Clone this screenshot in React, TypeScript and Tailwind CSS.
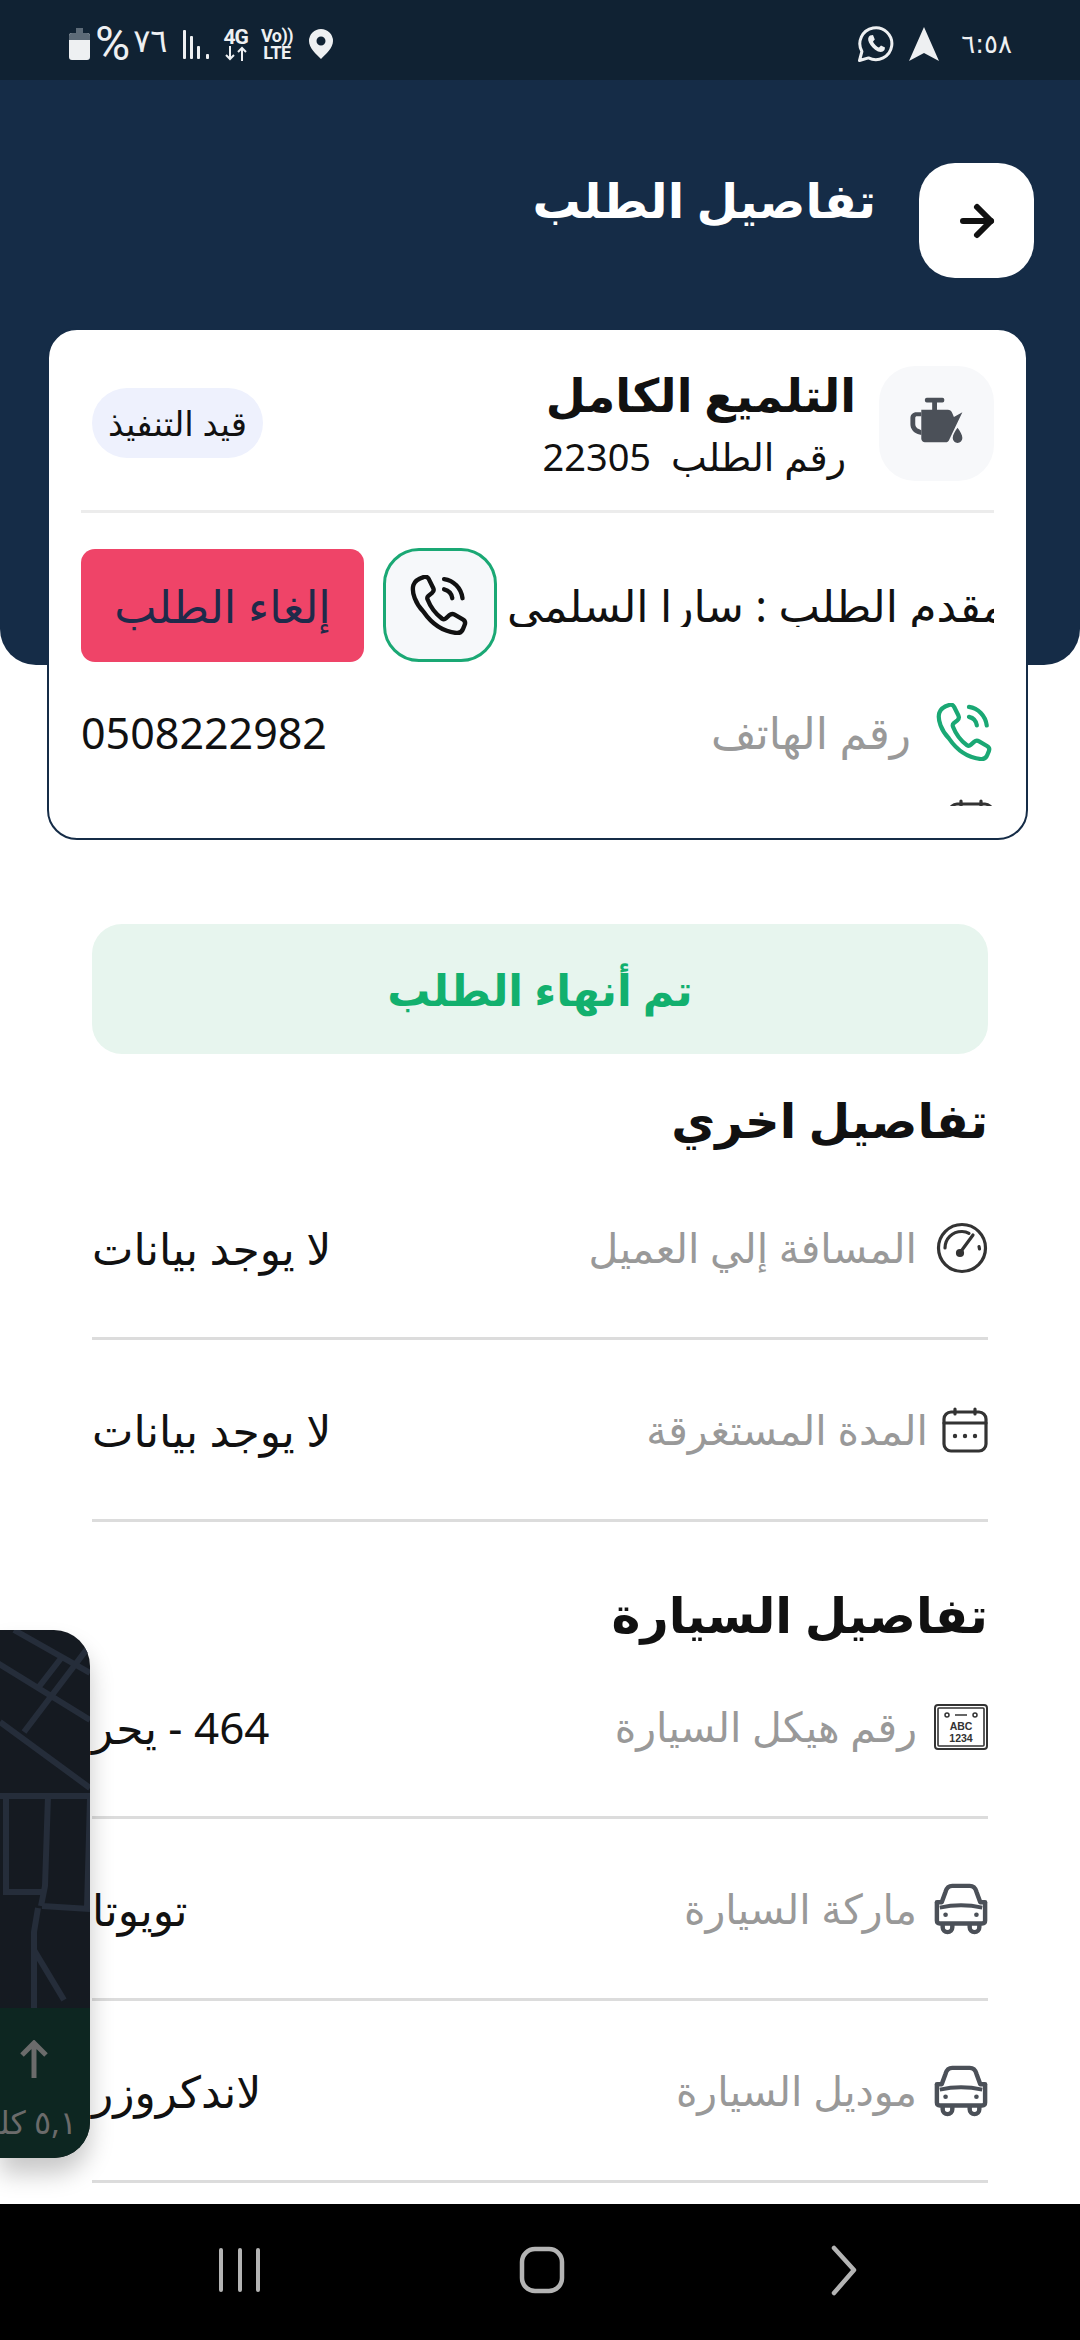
import { ArrowRight } from "lucide-react";
import type { ReactNode } from "react";

const font = "font-['Noto_Sans','DejaVu_Sans',sans-serif]";

function PhoneRing({ className }: { className?: string }) {
  return (
    <svg viewBox="2 2 44 44" className={className} fill="none" stroke="currentColor" strokeWidth="3.200" strokeLinecap="round" strokeLinejoin="round">
      <path d="M12 3.500c1.500-.5 3 0 3.800 1.500l3.200 6.500c.6 1.300.3 2.700-.8 3.600l-2.700 2.200c-.8.700-1 1.700-.6 2.700 2.200 5.700 5.800 10.500 10.600 14 .9.600 2 .5 2.800-.2l2.600-2.300c1.100-1 2.600-1.100 3.800-.4l6 3.500c1.400.8 2 2.400 1.400 3.900l-1.200 3c-.8 2-2.800 3.300-5 3-9.500-1-18-6.800-24-15.500C6 23 3 14.500 4.500 9.500 5.300 6.800 8.500 4.500 12 3.500z" />
      <path d="M27 5c7 1 12.500 6.500 13.500 14" />
      <path d="M27 12.500c3 .7 5.500 3 6 6.500" />
    </svg>
  );
}

function OilCan({ className }: { className?: string }) {
  return (
    <svg viewBox="0 0 48 48" className={className} fill="#4b5058">
      <rect x="14" y="3" width="16" height="4" rx="1.500" />
      <rect x="20" y="6" width="4" height="8" />
      <path d="M11 13h22c1.500 0 3 1 3.500 2.500L38 19l7-4-11 23c-.5 1-1.500 2-3 2H14c-1.500 0-3-1.500-3-3V13z" />
      <path d="M11 15H7c-3 0-5 2-5 5v5c0 3.500 2.500 7 6 8l3 1v-4l-2-1c-1.500-.5-3-2-3-4v-5c0-1 .5-1.500 1.500-1.500H11z" />
      <path d="M41 28c2 3 4 5.500 4 8.500a4 4 0 0 1-8 0c0-3 2-5.500 4-8.500z" />
    </svg>
  );
}

function Gauge({ className }: { className?: string }) {
  return (
    <svg viewBox="0 0 52 52" className={className} fill="none" stroke="#333" strokeWidth="3.200" strokeLinecap="round">
      <circle cx="26" cy="26" r="23.500" />
      <path d="M9 26c0-9 7-16.500 17-16.500 3 0 5 .6 7 1.800" />
      <path d="M43 24.500l.5 2.500" />
      <path d="M24.500 30L37 13" />
      <circle cx="24" cy="31" r="2.500" fill="#333" />
    </svg>
  );
}

function CalendarDots({ className }: { className?: string }) {
  return (
    <svg viewBox="0 0 46 46" className={className} fill="none" stroke="#333" strokeWidth="3.200" strokeLinecap="round">
      <rect x="2" y="5" width="42" height="39" rx="7" />
      <path d="M2 16h42M13 2v5M33 2v5" />
      <circle cx="13" cy="29" r="2.200" fill="#333" stroke="none" />
      <circle cx="23" cy="29" r="2.200" fill="#333" stroke="none" />
      <circle cx="33" cy="29" r="2.200" fill="#333" stroke="none" />
    </svg>
  );
}

function Plate({ className }: { className?: string }) {
  return (
    <svg viewBox="0 0 54 46" className={className}>
      <rect x="1" y="1" width="52" height="44" rx="3" fill="none" stroke="#333" strokeWidth="2" />
      <rect x="4" y="4" width="46" height="38" rx="1" fill="none" stroke="#333" strokeWidth="1.600" />
      <circle cx="13" cy="11" r="2" fill="none" stroke="#333" strokeWidth="1.500" />
      <circle cx="41" cy="11" r="2" fill="none" stroke="#333" strokeWidth="1.500" />
      <path d="M21 11h12" stroke="#333" strokeWidth="1.500" />
      <text x="27" y="26" textAnchor="middle" fontSize="10.500" fontWeight="700" fill="#333" fontFamily="Liberation Sans, sans-serif">ABC</text>
      <text x="27" y="38" textAnchor="middle" fontSize="10.500" fontWeight="700" fill="#333" fontFamily="Liberation Sans, sans-serif">1234</text>
    </svg>
  );
}

function Car({ className }: { className?: string }) {
  return (
    <svg viewBox="0 0 56 52" className={className} fill="none" stroke="#4b5058" strokeWidth="4.600" strokeLinejoin="round">
      <path d="M3 19h5l4-11c1-3.500 3.500-6 7-6h18c3.500 0 6 2.500 7 6l4 11h5" strokeLinecap="round" />
      <path d="M3 19v19c0 2 1 3 3 3h44c2 0 3-1 3-3V19" />
      <path d="M6 24.500c14-3 30-3 44 0" strokeWidth="4" />
      <path d="M9 41v4a5 5 0 0 0 10 0v-4M37 41v4a5 5 0 0 0 10 0v-4" />
      <circle cx="12" cy="32" r="2.400" fill="#4b5058" stroke="none" />
      <circle cx="44" cy="32" r="2.400" fill="#4b5058" stroke="none" />
    </svg>
  );
}

function StatusBar() {
  return (
    <div dir="ltr" className="h-[80px] bg-[#102233] flex items-center justify-between pl-[69px] pr-[68px] pt-[8px] shrink-0 text-[#eef0f2]">
      <div className="flex items-center">
        <svg viewBox="0 0 21 32" className="w-[21px] h-[32px]">
          <path d="M7 0h7v5h4a3 3 0 0 1 3 3v21a3 3 0 0 1-3 3H3a3 3 0 0 1-3-3V8a3 3 0 0 1 3-3h4z" fill="#eef0f2" />
          <path d="M7 0h7v5h4a3 3 0 0 1 3 3v4H0V8a3 3 0 0 1 3-3h4z" fill="#5d6b78" />
        </svg>
        <span className="text-[48px] leading-none ml-[5px] font-['Roboto',sans-serif]">%</span>
        <span className="text-[32px] leading-none ml-[3px] -mt-[6px] font-['DejaVu_Sans',sans-serif] tracking-[-2px]">٧٦</span>
        <svg viewBox="0 0 28 32" className="w-[28px] h-[32px] ml-[15px]" fill="#eef0f2">
          <rect x="0" y="2" width="3" height="29" rx="1" />
          <rect x="7" y="8" width="3" height="23" rx="1" />
          <rect x="14" y="18" width="3" height="13" rx="1" />
          <rect x="23" y="26" width="3" height="5" rx="1" />
        </svg>
        <div className="ml-[13px] flex flex-col items-center text-[21px] leading-[18px] font-bold font-['Roboto',sans-serif] tracking-[-1px]">
          <span>4G</span>
          <svg viewBox="0 0 24 15" className="w-[24px] h-[15px]" fill="none" stroke="#eef0f2" strokeWidth="2">
            <path d="M6 0v13M2 9l4 4 4-4M18 15V2M14 6l4-4 4 4" />
          </svg>
        </div>
        <div className="ml-[13px] flex flex-col items-center text-[18px] leading-[17px] font-bold font-['Roboto',sans-serif] tracking-[-0.5px]">
          <span>Vo))</span>
          <span>LTE</span>
        </div>
        <svg viewBox="0 0 24 30" className="w-[24px] h-[30px] ml-[16px]">
          <path fillRule="evenodd" d="M12 0a12 12 0 0 1 12 12c0 7-7 13-12 18C7 25 0 19 0 12A12 12 0 0 1 12 0zm0 7.500a4.500 4.500 0 1 0 0 9 4.500 4.500 0 0 0 0-9z" fill="#eef0f2" />
        </svg>
      </div>
      <div className="flex items-center">
        <svg viewBox="0 0 36 36" className="w-[36px] h-[36px]" fill="none">
          <path d="M1.500 34.500l2.400-9A16 16 0 1 1 10.500 31.900z" stroke="#eef0f2" strokeWidth="3" strokeLinejoin="round" />
          <path d="M12 9.500c-2 1.500-2.500 4-1 7 1.500 3.500 5 7 9 9 3 1 5 .5 6.500-1.500l.5-2.500-4-2-2 2c-2-.5-5-3.500-6-6l1.800-2-1.800-4.500z" fill="#eef0f2" />
        </svg>
        <svg viewBox="0 0 30 34" className="w-[30px] h-[34px] ml-[15px]">
          <path d="M15 0l15 34-15-8-15 8z" fill="#eef0f2" />
        </svg>
        <span className="text-[26px] leading-none ml-[22px] font-['DejaVu_Sans',sans-serif] tracking-[-1px]">٦:٥٨</span>
      </div>
    </div>
  );
}

function Row({ icon, label, value, gap = "gap-[17px]" }: { icon: ReactNode; label: string; value: string; gap?: string }) {
  return (
    <div className="h-[182px] border-b-[3px] border-[#dcdcdc] flex items-center justify-between">
      <div className={`flex items-center ${gap}`}>
        <div className="w-[54px] flex justify-start">{icon}</div>
        <span className="text-[41px] leading-none text-[#999]">{label}</span>
      </div>
      <span className="text-[44px] leading-none text-[#111]">{value}</span>
    </div>
  );
}

function MapWidget() {
  return (
    <div dir="ltr" className="absolute left-0 top-[1630px] w-[90px] h-[528px] rounded-r-[36px] overflow-hidden bg-[#151a21] flex flex-col justify-end shadow-[0_16px_24px_rgba(0,0,0,0.22)]">
      <svg viewBox="0 0 90 378" className="absolute left-0 top-0 w-[90px] h-[378px]" fill="none" stroke="#252d3a" strokeWidth="6">
        <path d="M14 0l76 43M-4 32l94 58M90 15L24 102M62 27L38 58M0 92l90 66" />
        <path d="M-2 166h92M48 166l-3 90-4 20M6 166v96h40M90 168l-3 110M42 276l48 3M38 278l-4 24v76M34 320l30 50" />
      </svg>
      <div className="relative h-[150px] bg-[#0d2621] flex flex-col items-end overflow-hidden">
        <svg viewBox="0 0 30 38" className="absolute left-[19px] top-[32px] w-[30px] h-[38px]" fill="none" stroke="#6b6b6b" strokeWidth="5">
          <path d="M15 38V4M3 15L15 3l12 12" />
        </svg>
        <div className="absolute right-[13px] top-[98px] flex justify-end whitespace-nowrap">
          <span dir="rtl" className="text-[32px] leading-none text-[#6b6b6b]">٥,١ كلم</span>
        </div>
      </div>
    </div>
  );
}

export default function App() {
  return (
    <div dir="rtl" className={`relative w-[1080px] h-[2340px] overflow-hidden bg-white flex flex-col ${font}`}>
      <StatusBar />

      <div className="flex-1 min-h-0 overflow-hidden">
        {/* Header */}
        <div className="h-[585px] bg-[#152c47] rounded-b-[36px] pt-[83px] pr-[46px]">
          <div className="flex items-center gap-[43px]">
            <div className="w-[115px] h-[115px] rounded-[36px] bg-white flex items-center justify-center">
              <ArrowRight size={48} strokeWidth={3} className="text-[#111]" />
            </div>
            <h1 className="text-[48px] leading-none font-bold text-white -mt-[42px]">تفاصيل الطلب</h1>
          </div>
        </div>

        {/* Order card */}
        <div className="relative -mt-[337px] ml-[47px] mr-[52px] h-[512px] rounded-[30px] border-2 border-[#152c47] bg-white px-[32px] overflow-hidden">
          <div className="h-[476px] overflow-hidden">
            <div className="h-[183px] border-b-[3px] border-[#ececec] flex items-center justify-between">
              <div className="flex items-center gap-[23px] mt-[6px]">
                <div className="w-[115px] h-[115px] rounded-[36px] bg-[#f7f8fa] flex items-center justify-center">
                  <OilCan className="w-[58px] h-[58px]" />
                </div>
                <div>
                  <div className="text-[46px] leading-[60px] font-bold text-[#111] -mt-[4px]">التلميع الكامل</div>
                  <div className="flex gap-[20px] mr-[10px] mt-[10px] text-[38px] leading-[44px] text-[#111]">
                    <span>رقم الطلب</span>
                    <span>22305</span>
                  </div>
                </div>
              </div>
              <div className="ml-[11px] mt-[6px] h-[70px] w-[171px] rounded-full bg-[#eef1fd] flex items-center justify-center text-[34px] leading-none text-[#111]">
                قيد التنفيذ
              </div>
            </div>

            <div className="h-[114px] mt-[35px] flex items-center justify-between">
              <div className="w-[487px] overflow-hidden flex justify-end">
                <span className="shrink-0 whitespace-nowrap text-[44px] leading-none text-[#111]">مقدم الطلب : سارا السلمي</span>
              </div>
              <div className="flex items-center gap-[19px]">
                <div className="w-[114px] h-[114px] rounded-[36px] border-[3px] border-[#1aa874] bg-[#f6f8fa] flex items-center justify-center">
                  <PhoneRing className="w-[60px] h-[60px] text-[#111]" />
                </div>
                <div className="w-[283px] h-[113px] rounded-[14px] bg-[#ef4468] flex items-center justify-center text-[45px] leading-none text-[#1f2a4a]">
                  إلغاء الطلب
                </div>
              </div>
            </div>

            <div className="mt-[41px] flex items-center justify-between">
              <div className="flex items-center gap-[25px]">
                <PhoneRing className="w-[58px] h-[58px] text-[#1aa874]" />
                <span className="text-[44px] leading-none text-[#999]">رقم الهاتف</span>
              </div>
              <span className="text-[43px] leading-none text-[#111]">0508222982</span>
            </div>

            <div className="mt-[38px] flex items-center justify-between">
              <CalendarDots className="w-[46px] h-[46px]" />
            </div>
          </div>
        </div>

        {/* Finish button */}
        <div className="mx-[92px] mt-[84px] h-[130px] rounded-[30px] bg-[#e7f5ee] flex items-center justify-center text-[43px] leading-none font-bold text-[#12b06e]">
          تم أنهاء الطلب
        </div>

        <div className="mx-[92px]">
          <h2 className="mt-[36px] h-[60px] text-[48px] leading-[60px] font-bold text-[#111]">تفاصيل اخري</h2>
          <div className="mt-[8px]">
            <Row icon={<Gauge className="w-[52px] h-[52px]" />} label="المسافة إلي العميل" value="لا يوجد بيانات" />
            <Row icon={<CalendarDots className="w-[46px] h-[46px]" />} label="المدة المستغرقة" value="لا يوجد بيانات" gap="gap-[6px]" />
          </div>

          <h2 className="mt-[62px] h-[60px] text-[49px] leading-[60px] font-bold text-[#111]">تفاصيل السيارة</h2>
          <div className="-mt-[7px]">
            <Row icon={<Plate className="w-[54px] h-[46px]" />} label="رقم هيكل السيارة" value="464 - يحر" />
            <Row icon={<Car className="w-[56px] h-[52px]" />} label="ماركة السيارة" value="تويوتا" />
            <Row icon={<Car className="w-[56px] h-[52px]" />} label="موديل السيارة" value="لاندكروزر" />
          </div>
        </div>
      </div>

      {/* Android nav bar */}
      <div className="h-[136px] bg-black shrink-0 flex items-center" dir="ltr">
        <svg viewBox="0 0 1080 136" className="w-[1080px] h-[136px]" fill="none" stroke="#b4b4b4" strokeLinecap="round" strokeLinejoin="round">
          <path d="M221 46v40M240 46v40M258 46v40" strokeWidth="4" />
          <rect x="522" y="45" width="40" height="42" rx="13" strokeWidth="4.500" />
          <path d="M834 44l20 22-20 23" strokeWidth="4.500" />
        </svg>
      </div>

      <MapWidget />
    </div>
  );
}
